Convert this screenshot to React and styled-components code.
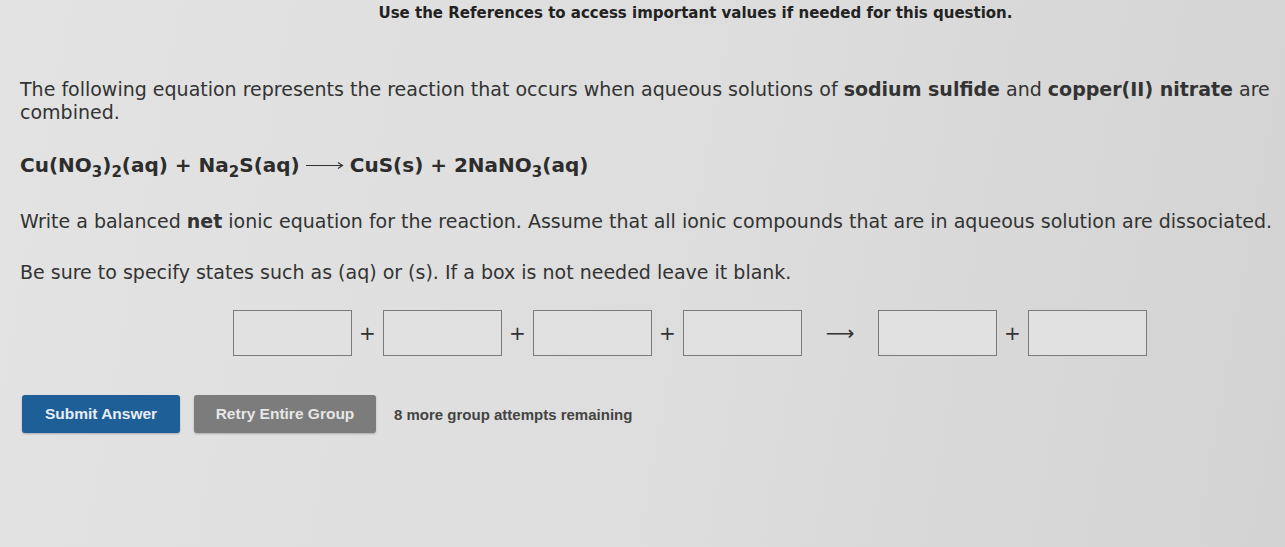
import styled, { createGlobalStyle } from "styled-components";

const Global = createGlobalStyle`
  html, body {
    margin: 0;
    padding: 0;
    background: #dcdddc;
  }
  body {
    font-family: "DejaVu Sans", Verdana, sans-serif;
    color: #333;
  }
`;

const Page = styled.div`
  width: 1285px;
  height: 547px;
  overflow: hidden;
  background: linear-gradient(100deg, #e2e3e2 0%, #dcdddc 55%, #d2d3d2 100%);
`;

const Notice = styled.div`
  text-align: center;
  font-weight: bold;
  font-size: 15px;
  line-height: 18px;
  padding-top: 4px;
  padding-left: 106px;
  color: #222;
`;

const Body = styled.div`
  padding: 56px 0 0 20px;
`;

const Para = styled.p`
  margin: 0;
  font-size: 19px;
  line-height: 23px;
  margin-top: ${(p) => p.$top || 0}px;
  white-space: ${(p) => (p.$nowrap ? "nowrap" : "normal")};
`;

const Equation = styled.div`
  margin-top: 29px;
  font-size: 20px;
  font-weight: bold;
  line-height: 24px;
  color: #2d2d2d;
  display: flex;
  align-items: baseline;
  white-space: pre;

  sub {
    font-size: 15px;
    vertical-align: -5px;
    line-height: 0;
  }
`;

const LongArrow = styled.svg`
  width: 38px;
  height: 10px;
  margin: 0 6px 0 6px;
  align-self: center;
`;

const AnswerRow = styled.div`
  display: flex;
  align-items: center;
  margin-top: 26px;
  padding-left: 213px;
`;

const Box = styled.div`
  width: 119px;
  height: 46px;
  box-sizing: border-box;
  border: 1.5px solid #7a7a7a;
  background: #e0e1e0;
`;

const Plus = styled.span`
  font-size: 20px;
  color: #333;
  width: 31px;
  text-align: center;
`;

const ArrowSign = styled.span`
  width: 76px;
  text-align: center;
  font-size: 20px;
  color: #333;
`;

const Actions = styled.div`
  display: flex;
  align-items: center;
  gap: 14px;
  margin-top: 39px;
  padding-left: 2px;
`;

const Button = styled.button`
  font-family: "Liberation Sans", Arial, sans-serif;
  font-weight: bold;
  font-size: 15.5px;
  height: 38px;
  width: ${(p) => p.$w}px;
  border: none;
  border-radius: 3px;
  color: ${(p) => p.$fg};
  background: ${(p) => p.$bg};
  box-shadow: 0 1px 2px rgba(0, 0, 0, 0.25);
`;

const Attempts = styled.span`
  font-family: "Liberation Sans", Arial, sans-serif;
  font-weight: bold;
  font-size: 15px;
  color: #444;
  margin-left: 4px;
`;

export default function App() {
  return (
    <Page>
      <Global />
      <Notice>Use the References to access important values if needed for this question.</Notice>
      <Body>
        <Para>
          The following equation represents the reaction that occurs when aqueous solutions of{" "}
          <b>sodium sulfide</b> and <b>copper(II) nitrate</b> are
          <br />
          combined.
        </Para>
        <Equation>
          <span>
            Cu(NO<sub>3</sub>)<sub>2</sub>(aq) + Na<sub>2</sub>S(aq)
          </span>
          <LongArrow viewBox="0 0 38 10">
            <path d="M0 5.5 H36" stroke="#333" strokeWidth="1.2" />
            <path d="M32 2.5 L36.5 5.5 L32 8.5" stroke="#333" strokeWidth="1.2" fill="none" />
          </LongArrow>
          <span>
            CuS(s) + 2NaNO<sub>3</sub>(aq)
          </span>
        </Equation>
        <Para $top={33} $nowrap>
          Write a balanced <b>net</b> ionic equation for the reaction. Assume that all ionic compounds that are in
          aqueous solution are dissociated.
        </Para>
        <Para $top={28}>Be sure to specify states such as (aq) or (s). If a box is not needed leave it blank.</Para>
        <AnswerRow>
          <Box />
          <Plus>+</Plus>
          <Box />
          <Plus>+</Plus>
          <Box />
          <Plus>+</Plus>
          <Box />
          <ArrowSign>⟶</ArrowSign>
          <Box />
          <Plus>+</Plus>
          <Box />
        </AnswerRow>
        <Actions>
          <Button $w={158} $bg="#1f5f98" $fg="#e8eef5">Submit Answer</Button>
          <Button $w={182} $bg="#7b7c7b" $fg="#e6e6e6">Retry Entire Group</Button>
          <Attempts>8 more group attempts remaining</Attempts>
        </Actions>
      </Body>
    </Page>
  );
}
